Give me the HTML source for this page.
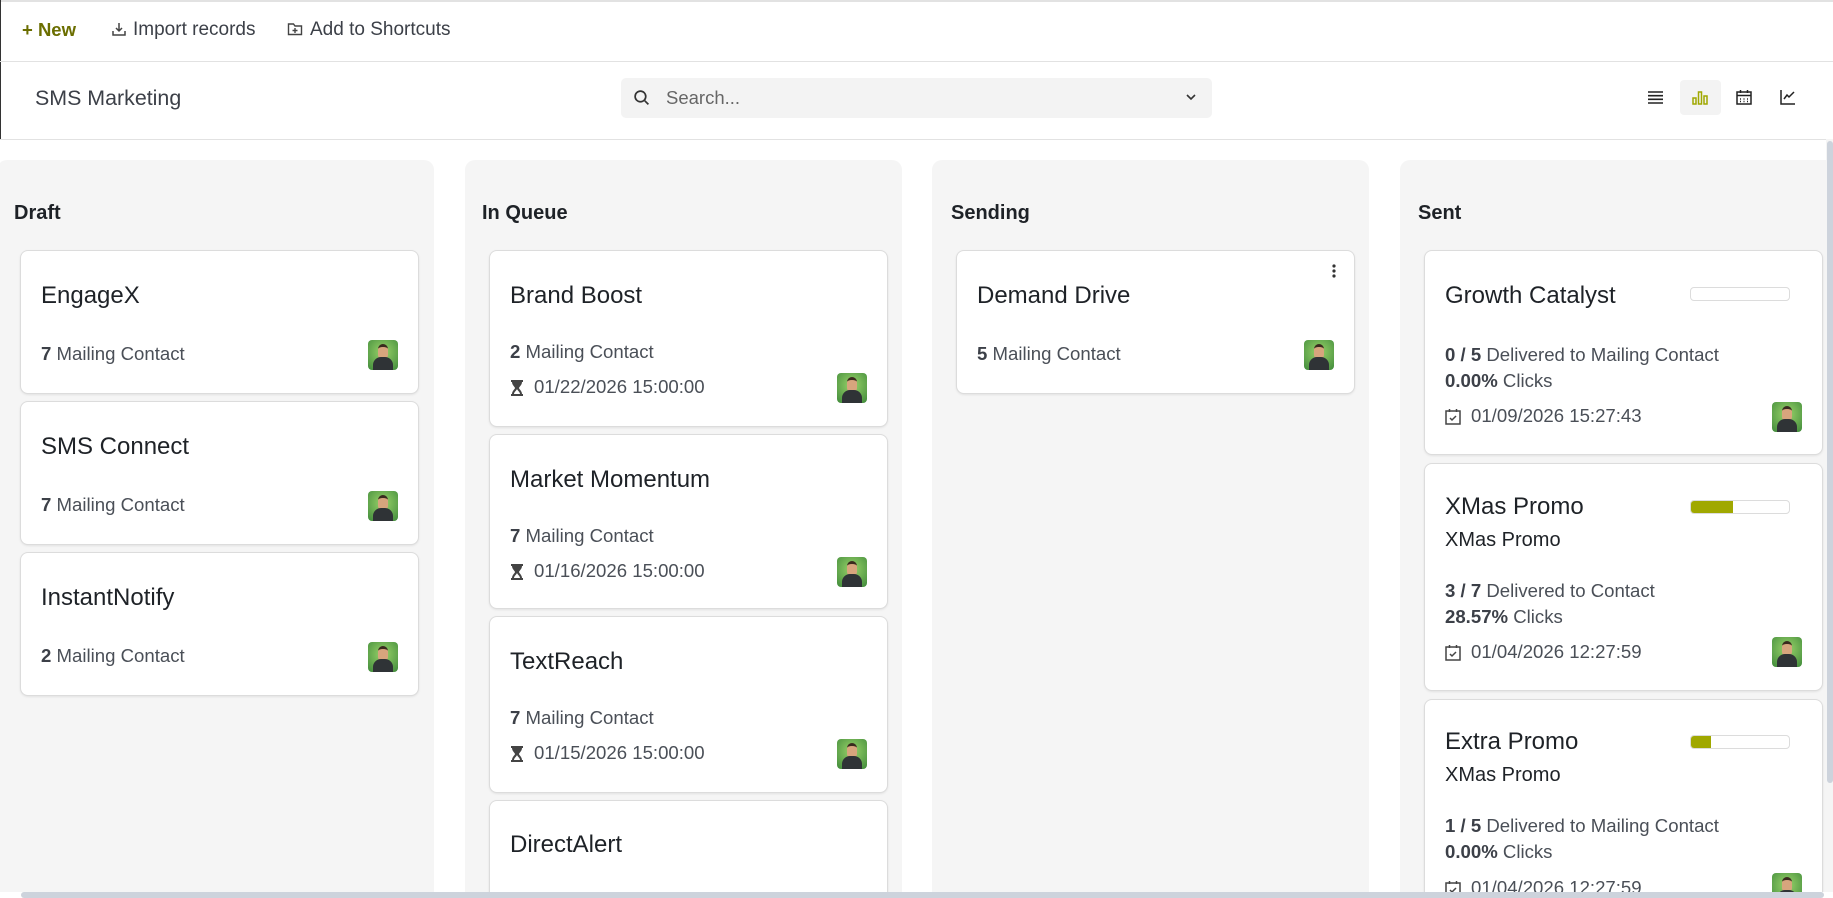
<!DOCTYPE html>
<html><head><meta charset="utf-8">
<style>
*{box-sizing:border-box;margin:0;padding:0}
html,body{width:1833px;height:898px;overflow:hidden;background:#fff;font-family:"Liberation Sans",Arial,sans-serif;color:#4a4f57}
#w{position:relative;width:1833px;height:898px;overflow:hidden}
.abs{position:absolute}
.t{position:absolute;white-space:nowrap;line-height:24px}
.col{position:absolute;top:160px;width:437px;height:738px;background:#f5f5f5;border-radius:10px 10px 0 0}
.colh{position:absolute;top:202px;font-weight:bold;font-size:20px;color:#1e2227}
.card{position:absolute;width:399px;background:#fff;border:1px solid #dcdcdc;border-radius:8px;box-shadow:0 1px 2px rgba(0,0,0,.08)}
.title{position:absolute;left:20px;font-size:24px;color:#1e2227;line-height:28px;white-space:nowrap}
.sub{position:absolute;left:20px;font-size:20px;color:#1e2227;line-height:24px;white-space:nowrap}
.line{position:absolute;left:20px;font-size:18.6px;line-height:24px;white-space:nowrap;color:#4a4f57}
.line b{color:#3c4048}
.av{position:absolute;right:20px;width:30px;height:30px;border-radius:4px;background:radial-gradient(circle at 50% 40%,#9ad36a,#3f8a3a);overflow:hidden}
.av:before{content:"";position:absolute;left:10px;top:4px;width:10px;height:12px;border-radius:5px 5px 4px 4px;background:#d7a57d;border-top:3px solid #3a2a1e}
.av:after{content:"";position:absolute;left:5px;top:17px;width:20px;height:14px;border-radius:8px 8px 0 0;background:#2f3336}
.ico{display:inline-block;vertical-align:-3px;margin-right:10px}
.pb{position:absolute;left:265px;width:100px;height:14px;border:1px solid #dcdcdc;border-radius:4px;overflow:hidden;background:#fff}
.pb i{display:block;height:100%;background:#a0a800}
</style></head><body><div id="w">
<div class="abs" style="left:0;top:0;width:1833px;height:2px;background:#e2e2e2"></div>
<div class="abs" style="left:0;top:0;width:1px;height:139px;background:#333"></div>
<div class="t" style="left:22px;top:18px;font-size:18.5px;font-weight:bold;color:#6b6e00">+ New</div>
<svg class="abs" style="left:111px;top:21px" width="16" height="16" viewBox="0 0 16 16" fill="none" stroke="#444" stroke-width="1.5"><path d="M8 2v8M5 7l3 3 3-3M2 10v4h12v-4"/></svg>
<div class="t" style="left:133px;top:18px;font-size:19px;color:#3c4048">Import records</div>
<svg class="abs" style="left:287px;top:21px" width="16" height="16" viewBox="0 0 16 16" fill="none" stroke="#444" stroke-width="1.4"><path d="M1.5 3h5l1.5 2h6.5v8.5h-13z"/><path d="M8 7v5M5.5 9.5h5"/></svg>
<div class="t" style="left:310px;top:18px;font-size:19px;color:#3c4048">Add to Shortcuts</div>
<div class="abs" style="left:0;top:61px;width:1833px;height:1px;background:#e2e2e2"></div>
<div class="t" style="left:35px;top:86px;font-size:21.4px;color:#3c4048">SMS Marketing</div>
<div class="abs" style="left:621px;top:78px;width:591px;height:40px;background:#f3f3f3;border-radius:5px"></div>
<svg class="abs" style="left:633px;top:89px" width="17" height="17" viewBox="0 0 16 16" fill="none" stroke="#333" stroke-width="1.6"><circle cx="7" cy="7" r="5"/><path d="M11 11l3.5 3.5"/></svg>
<div class="t" style="left:666px;top:86px;font-size:18.5px;color:#666">Search...</div>
<svg class="abs" style="left:1185px;top:93px" width="12" height="8" viewBox="0 0 12 8" fill="none" stroke="#333" stroke-width="1.6"><path d="M2 2l4 4 4-4"/></svg>
<svg class="abs" style="left:1648px;top:91px" width="15" height="13" viewBox="0 0 15 13" stroke="#222" stroke-width="1.6"><path d="M0 1h15M0 4.7h15M0 8.3h15M0 12h15"/></svg>
<div class="abs" style="left:1680px;top:80px;width:41px;height:35px;background:#f3f3f3;border-radius:4px"></div>
<svg class="abs" style="left:1692px;top:90px" width="16" height="15" viewBox="0 0 16 15" fill="none" stroke="#a0a800" stroke-width="1.5"><path d="M1 8h3v6H1zM6.5 2h3v12h-3zM12 6h3v8h-3z"/></svg>
<svg class="abs" style="left:1736px;top:89px" width="16" height="16" viewBox="0 0 16 16" fill="none" stroke="#222" stroke-width="1.5"><rect x="1" y="3" width="14" height="12"/><path d="M1 6.5h14M4.5 1v3M11.5 1v3M4 10h1M7.5 10h1M11 10h1M4 12.5h1M7.5 12.5h1M11 12.5h1"/></svg>
<svg class="abs" style="left:1780px;top:89px" width="16" height="16" viewBox="0 0 16 16" fill="none" stroke="#222" stroke-width="1.5"><path d="M1 1v14h14M4 10l3-4 2 2 5-5"/></svg>
<div class="abs" style="left:0;top:139px;width:1833px;height:1px;background:#e2e2e2"></div>

<div class="col" style="left:-3px"></div>
<div class="col" style="left:465px"></div>
<div class="col" style="left:932px"></div>
<div class="col" style="left:1400px"></div>
<div class="colh" style="left:14px">Draft</div>
<div class="colh" style="left:482px">In Queue</div>
<div class="colh" style="left:951px">Sending</div>
<div class="colh" style="left:1418px">Sent</div>

<div class="card" style="left:20px;top:250px;height:144px"><div class="title" style="top:31px">EngageX</div><div class="line" style="top:91px"><b>7</b> Mailing Contact</div><div class="av" style="top:89px"></div></div>
<div class="card" style="left:20px;top:401px;height:144px"><div class="title" style="top:31px">SMS Connect</div><div class="line" style="top:91px"><b>7</b> Mailing Contact</div><div class="av" style="top:89px"></div></div>
<div class="card" style="left:20px;top:552px;height:144px"><div class="title" style="top:31px">InstantNotify</div><div class="line" style="top:91px"><b>2</b> Mailing Contact</div><div class="av" style="top:89px"></div></div>

<div class="card" style="left:489px;top:250px;height:177px"><div class="title" style="top:31px">Brand Boost</div><div class="line" style="top:89px"><b>2</b> Mailing Contact</div><div class="line" style="top:124px"><svg class="ico" width="14" height="16" viewBox="0 0 14 16" fill="#444"><path d="M1 0h12v2h-1c0 3-3 5-3 6s3 3 3 6h1v2H1v-2h1c0-3 3-5 3-6S2 5 2 2H1zM4 14h6c0-2-3-4-3-5-0 1-3 3-3 5z"/></svg>01/22/2026 15:00:00</div><div class="av" style="top:122px"></div></div>
<div class="card" style="left:489px;top:434px;height:175px"><div class="title" style="top:31px">Market Momentum</div><div class="line" style="top:89px"><b>7</b> Mailing Contact</div><div class="line" style="top:124px"><svg class="ico" width="14" height="16" viewBox="0 0 14 16" fill="#444"><path d="M1 0h12v2h-1c0 3-3 5-3 6s3 3 3 6h1v2H1v-2h1c0-3 3-5 3-6S2 5 2 2H1zM4 14h6c0-2-3-4-3-5-0 1-3 3-3 5z"/></svg>01/16/2026 15:00:00</div><div class="av" style="top:122px"></div></div>
<div class="card" style="left:489px;top:616px;height:177px"><div class="title" style="top:31px">TextReach</div><div class="line" style="top:89px"><b>7</b> Mailing Contact</div><div class="line" style="top:124px"><svg class="ico" width="14" height="16" viewBox="0 0 14 16" fill="#444"><path d="M1 0h12v2h-1c0 3-3 5-3 6s3 3 3 6h1v2H1v-2h1c0-3 3-5 3-6S2 5 2 2H1zM4 14h6c0-2-3-4-3-5-0 1-3 3-3 5z"/></svg>01/15/2026 15:00:00</div><div class="av" style="top:122px"></div></div>
<div class="card" style="left:489px;top:800px;height:98px;border-bottom:none;border-radius:8px 8px 0 0"><div class="title" style="top:30px">DirectAlert</div></div>

<div class="card" style="left:956px;top:250px;height:144px"><div class="title" style="top:31px">Demand Drive</div><div class="line" style="top:91px"><b>5</b> Mailing Contact</div><div class="av" style="top:89px"></div>
<svg class="abs" style="left:375px;top:12px" width="4" height="16" viewBox="0 0 4 16" fill="#333"><circle cx="2" cy="3" r="1.6"/><circle cx="2" cy="8" r="1.6"/><circle cx="2" cy="13" r="1.6"/></svg></div>

<div class="card" style="left:1424px;top:250px;height:205px"><div class="title" style="top:31px">Growth Catalyst</div><div class="pb" style="top:36px"><i style="width:0"></i></div>
<div class="line" style="top:92px"><b>0 / 5</b> Delivered to Mailing Contact</div><div class="line" style="top:118px"><b>0.00%</b> Clicks</div>
<div class="line" style="top:153px"><svg class="ico" width="16" height="17" viewBox="0 0 16 17" fill="none" stroke="#444" stroke-width="1.5"><rect x="1" y="3" width="14" height="13"/><path d="M4.5 1v3M11.5 1v3M5 10l2 2 4-4"/></svg>01/09/2026 15:27:43</div><div class="av" style="top:151px"></div></div>
<div class="card" style="left:1424px;top:463px;height:228px"><div class="title" style="top:29px">XMas Promo</div><div class="pb" style="top:36px"><i style="width:43%"></i></div><div class="sub" style="top:64px">XMas Promo</div>
<div class="line" style="top:115px"><b>3 / 7</b> Delivered to Contact</div><div class="line" style="top:141px"><b>28.57%</b> Clicks</div>
<div class="line" style="top:176px"><svg class="ico" width="16" height="17" viewBox="0 0 16 17" fill="none" stroke="#444" stroke-width="1.5"><rect x="1" y="3" width="14" height="13"/><path d="M4.5 1v3M11.5 1v3M5 10l2 2 4-4"/></svg>01/04/2026 12:27:59</div><div class="av" style="top:173px"></div></div>
<div class="card" style="left:1424px;top:699px;height:199px;border-bottom:none;border-radius:8px 8px 0 0"><div class="title" style="top:28px">Extra Promo</div><div class="pb" style="top:35px"><i style="width:20%"></i></div><div class="sub" style="top:63px">XMas Promo</div>
<div class="line" style="top:114px"><b>1 / 5</b> Delivered to Mailing Contact</div><div class="line" style="top:140px"><b>0.00%</b> Clicks</div>
<div class="line" style="top:176px"><svg class="ico" width="16" height="17" viewBox="0 0 16 17" fill="none" stroke="#444" stroke-width="1.5"><rect x="1" y="3" width="14" height="13"/><path d="M4.5 1v3M11.5 1v3M5 10l2 2 4-4"/></svg>01/04/2026 12:27:59</div><div class="av" style="top:173px"></div></div>

<div class="abs" style="left:1826px;top:139px;width:7px;height:759px;background:#f5f5f5"></div>
<div class="abs" style="left:1827px;top:141px;width:6px;height:642px;background:#cdd3dc;border-radius:3px"></div>
<div class="abs" style="left:0;top:892px;width:1833px;height:6px;background:#fff"></div>
<div class="abs" style="left:21px;top:892px;width:1803px;height:6px;background:#cdd3dc;border-radius:3px"></div>
</div></body></html>
